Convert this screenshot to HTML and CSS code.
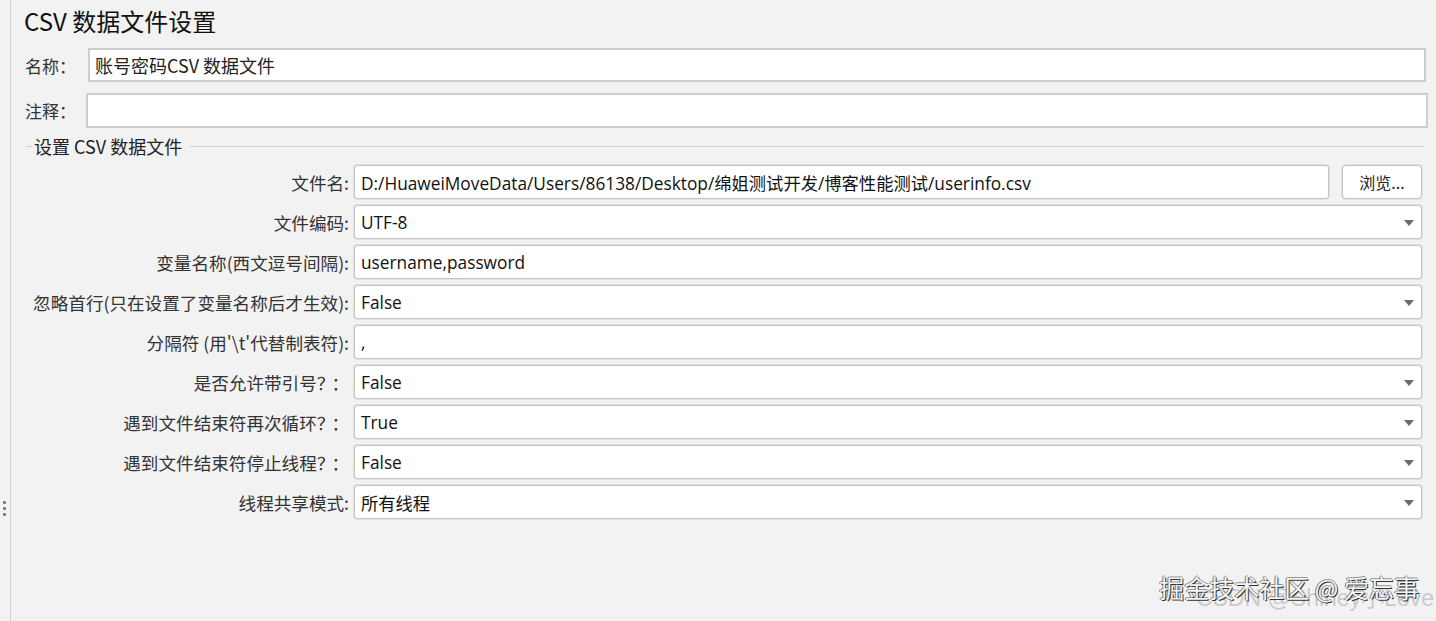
FILE: index.html
```html
<!DOCTYPE html>
<html lang="zh-CN">
<head>
<meta charset="utf-8">
<title>CSV 数据文件设置</title>
<link rel="stylesheet" href="styles.css">
</head>
<body>
<div class="splitter"><span></span><span></span><span></span></div>
<main class="panel">
  <h1 class="title">CSV 数据文件设置</h1>
  <div class="top-row name-row">
    <label class="top-label">名称：</label>
    <div class="field">账号密码CSV 数据文件</div>
  </div>
  <div class="top-row comment-row">
    <label class="top-label">注释：</label>
    <div class="field"></div>
  </div>
  <section class="group">
    <div class="legend"><span class="legend-text">设置 CSV 数据文件</span><span class="legend-line"></span></div>
    <div class="form">
      <label class="lbl">文件名:</label>
      <div class="file-wrap">
        <div class="field box">D:/HuaweiMoveData/Users/86138/Desktop/绵姐测试开发/博客性能测试/userinfo.csv</div>
        <button class="browse">浏览...</button>
      </div>

      <label class="lbl">文件编码:</label>
      <div class="field box select">UTF-8<i class="arrow"></i></div>

      <label class="lbl">变量名称(西文逗号间隔):</label>
      <div class="field box">username,password</div>

      <label class="lbl">忽略首行(只在设置了变量名称后才生效):</label>
      <div class="field box select">False<i class="arrow"></i></div>

      <label class="lbl">分隔符 (用'\t'代替制表符):</label>
      <div class="field box">,</div>

      <label class="lbl">是否允许带引号<span class="punct">？：</span></label>
      <div class="field box select">False<i class="arrow"></i></div>

      <label class="lbl">遇到文件结束符再次循环<span class="punct">？：</span></label>
      <div class="field box select">True<i class="arrow"></i></div>

      <label class="lbl">遇到文件结束符停止线程<span class="punct">？：</span></label>
      <div class="field box select">False<i class="arrow"></i></div>

      <label class="lbl">线程共享模式:</label>
      <div class="field box select">所有线程<i class="arrow"></i></div>
    </div>
  </section>
</main>
<div class="watermark">
  <span class="wm-back">CSDN @Shirley小Love</span>
  <span class="wm-front">掘金技术社区 @ 爱忘事</span>
</div>
</body>
</html>
```

FILE: styles.css
```css
html, body {
  margin: 0;
  padding: 0;
  height: 100%;
}
body {
  background: #f2f2f2;
  font-family: "Noto Sans", "Noto Sans CJK SC", sans-serif;
  color: #1e1e1e;
  overflow: hidden;
  position: relative;
  display: flex;
}
.splitter {
  width: 10px;
  display: flex;
  flex-direction: column;
  align-items: center;
  justify-content: flex-start;
  gap: 3px;
  padding-top: 501px;
  box-sizing: border-box;
  height: 621px;
}
.splitter span {
  width: 3px;
  height: 3px;
  background: #7a7a7a;
  border-radius: 1px;
  margin-left: -2px;
}
.panel {
  flex: 1;
  border-left: 1px solid #d2d2d2;
  padding: 0 4px 0 13px;
  height: 621px;
  box-sizing: border-box;
}
.title {
  margin: 6px 0 0 0;
  height: 30px;
  font-family: "Noto Sans CJK SC", sans-serif;
  font-weight: normal;
  font-size: 24px;
  line-height: 30px;
  color: #111;
}
.top-row {
  display: flex;
  align-items: center;
}
.name-row {
  margin-top: 12px;
  height: 34px;
}
.comment-row {
  margin-top: 11px;
  height: 35px;
}
.top-label {
  font-family: "Noto Sans CJK SC", sans-serif;
  font-size: 17px;
  color: #333;
  padding-left: 1px;
}
.name-row .top-label { width: 63px; }
.comment-row .top-label { width: 61px; }
.top-row .field {
  flex: 1;
  height: 100%;
  box-sizing: border-box;
  background: #fff;
  border: 2px solid #cdcdcd;
  font-family: "Noto Sans CJK SC", sans-serif;
  font-size: 18px;
  color: #222;
  padding-left: 5px;
  display: flex;
  align-items: center;
}
.name-row .field { margin-right: 6px; }
.comment-row .field { margin-right: 4px; }

.group {
  margin-top: 7px;
  padding-left: 2px;
}
.legend {
  display: flex;
  align-items: center;
  height: 22px;
}
.legend::before {
  content: "";
  width: 6px;
  border-top: 1px solid #d0d0d0;
  margin-right: 2px;
}
.legend-text {
  font-family: "Noto Sans CJK SC", sans-serif;
  font-size: 18px;
  color: #222;
}
.legend-line {
  flex: 1;
  border-top: 1px solid #d0d0d0;
  margin-left: 8px;
  margin-right: 8px;
}
.form {
  margin-top: 8px;
  display: grid;
  grid-template-columns: 323px 1fr;
  column-gap: 5px;
  row-gap: 6px;
  grid-auto-rows: 34px;
  margin-right: 10px;
}
.lbl {
  font-family: "Noto Sans CJK SC", sans-serif;
  font-size: 17.6px;
  color: #333;
  text-align: right;
  align-self: center;
  white-space: nowrap;
}
.punct {
  letter-spacing: -3px;
  padding-right: 3px;
}
.file-wrap {
  display: flex;
  gap: 13px;
}
.box {
  box-sizing: border-box;
  height: 34px;
  background: #fff;
  border: 1px solid #c4c4c4;
  border-radius: 3px;
  box-shadow: 0 0 0 1px #e2e2e2;
  display: flex;
  align-items: center;
  padding-left: 6px;
  font-family: "Open Sans", "Noto Sans CJK SC", sans-serif;
  font-size: 17.3px;
  color: #111;
  position: relative;
}
.file-wrap .box { flex: 1; }
.browse {
  width: 80px;
  height: 34px;
  box-sizing: border-box;
  background: #fff;
  border: 1px solid #c4c4c4;
  border-radius: 4px;
  box-shadow: 0 0 0 1px #e2e2e2;
  font-family: "Noto Sans CJK SC", sans-serif;
  font-size: 16px;
  color: #222;
  padding: 0;
}
.arrow {
  position: absolute;
  right: 7px;
  top: 14px;
  width: 0;
  height: 0;
  border-left: 5px solid transparent;
  border-right: 5px solid transparent;
  border-top: 6px solid #6a6a6a;
}
.watermark {
  position: absolute;
  right: 0;
  bottom: 8px;
  width: 290px;
  height: 44px;
}
.wm-back {
  position: absolute;
  right: 2px;
  bottom: 0;
  font-family: "Liberation Sans", "Noto Sans CJK SC", sans-serif;
  font-size: 23px;
  color: rgba(150,150,150,0.45);
  white-space: nowrap;
}
.wm-front {
  position: absolute;
  right: 17px;
  bottom: 8px;
  font-family: "Noto Sans CJK SC", sans-serif;
  font-size: 25px;
  color: #f4f4f4;
  white-space: nowrap;
  text-shadow: 1px 1px 0 #333, -1px 0 0 #777, 0 -1px 0 #999;
}
```
